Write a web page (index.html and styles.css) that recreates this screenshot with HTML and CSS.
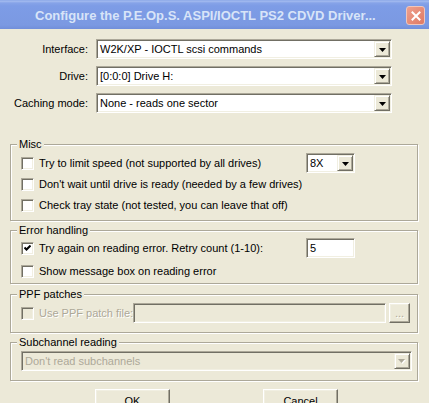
FILE: index.html
```html
<!DOCTYPE html>
<html>
<head>
<meta charset="utf-8">
<link rel="stylesheet" href="styles.css">
</head>
<body>
<div class="window">
  <div class="titlebar">
    <span class="title">Configure the P.E.Op.S. ASPI/IOCTL PS2 CDVD Driver...</span>
    <span class="close"><svg width="10" height="10" viewBox="0 0 10 10"><path d="M1.5 1.5 L8.5 8.5 M8.5 1.5 L1.5 8.5" stroke="#fff" stroke-width="2" stroke-linecap="square"/></svg></span>
  </div>
  <div class="content">
    <div class="fields">
      <span class="flabel">Interface:</span>
      <div class="combo"><span class="ctext">W2K/XP - IOCTL scsi commands</span><span class="arrow"><svg width="7" height="4" viewBox="0 0 7 4"><polygon points="0,0 7,0 3.5,4" fill="#000"/></svg></span></div>
      <span class="flabel">Drive:</span>
      <div class="combo"><span class="ctext">[0:0:0] Drive H:</span><span class="arrow"><svg width="7" height="4" viewBox="0 0 7 4"><polygon points="0,0 7,0 3.5,4" fill="#000"/></svg></span></div>
      <span class="flabel">Caching mode:</span>
      <div class="combo"><span class="ctext">None - reads one sector</span><span class="arrow"><svg width="7" height="4" viewBox="0 0 7 4"><polygon points="0,0 7,0 3.5,4" fill="#000"/></svg></span></div>
    </div>

    <div class="group misc">
      <span class="gtitle">Misc</span>
      <div class="row split">
        <label class="check"><span class="cb"></span><span>Try to limit speed (not supported by all drives)</span></label>
        <div class="combo small"><span class="ctext">8X</span><span class="arrow"><svg width="7" height="4" viewBox="0 0 7 4"><polygon points="0,0 7,0 3.5,4" fill="#000"/></svg></span></div>
      </div>
      <div class="row">
        <label class="check"><span class="cb"></span><span>Don't wait until drive is ready (needed by a few drives)</span></label>
      </div>
      <div class="row">
        <label class="check"><span class="cb"></span><span>Check tray state (not tested, you can leave that off)</span></label>
      </div>
    </div>

    <div class="group errors">
      <span class="gtitle">Error handling</span>
      <div class="row split">
        <label class="check"><span class="cb checked"><svg width="7" height="7" viewBox="0 0 7 7"><path d="M0.5 2.5 L2.5 4.5 L6.5 0.5" stroke="#000" stroke-width="2" fill="none"/></svg></span><span>Try again on reading error. Retry count (1-10):</span></label>
        <div class="edit small"><span class="ctext">5</span></div>
      </div>
      <div class="row second">
        <label class="check"><span class="cb"></span><span>Show message box on reading error</span></label>
      </div>
    </div>

    <div class="group ppf">
      <span class="gtitle">PPF patches</span>
      <div class="row ppfrow">
        <label class="check disabled"><span class="cb"></span><span>Use PPF patch file:</span></label>
        <div class="edit disabledfield"></div>
        <span class="btn dots disabledtext">...</span>
      </div>
    </div>

    <div class="group sub">
      <span class="gtitle">Subchannel reading</span>
      <div class="combo wide disabledfield"><span class="ctext disabledtext">Don't read subchannels</span><span class="arrow"><svg width="8" height="5" viewBox="0 0 8 5"><polygon points="1,1 8,1 4.5,5" fill="#fff"/><polygon points="0,0 7,0 3.5,4" fill="#aca899"/></svg></span></div>
    </div>

    <div class="buttons">
      <span class="btn main">OK</span>
      <span class="btn main">Cancel</span>
    </div>
  </div>
</div>
</body>
</html>
```
FILE: styles.css
```css
html, body {
  margin: 0;
  padding: 0;
  background: #ece9d8;
}
body {
  font-family: "Liberation Sans", Arial, sans-serif;
  font-size: 11px;
  color: #000;
  width: 429px;
  height: 403px;
  overflow: hidden;
}
.window {
  width: 429px;
}
.titlebar {
  height: 29px;
  display: flex;
  align-items: center;
  background: linear-gradient(#a6bdf0 0, #86a3e8 2px, #7d9ce6 5px, #7b99e2 24px, #6f8cd8 29px);
  border-top: 1px solid #93aeea;
  box-sizing: border-box;
}
.title {
  padding-left: 35px;
  font-weight: bold;
  font-size: 13px;
  color: #d8e4f8;
  white-space: nowrap;
}
.close {
  margin-left: auto;
  margin-right: 4px;
  width: 19px;
  height: 19px;
  box-sizing: border-box;
  border: 1px solid #f0c6bb;
  border-radius: 3px;
  background: linear-gradient(135deg, #eea08e, #e07a63);
  display: flex;
  align-items: center;
  justify-content: center;
  margin-top: 1px;
}
.content {
  padding: 10px 10px 0 10px;
}
.fields {
  display: grid;
  grid-template-columns: 78px 296px;
  grid-auto-rows: 20px;
  column-gap: 8px;
  row-gap: 7px;
}
.flabel {
  text-align: right;
  line-height: 20px;
}
.combo, .edit {
  box-sizing: border-box;
  height: 20px;
  display: flex;
  align-items: center;
  background: #fff;
  border: 1px solid;
  border-color: #aca899 #fff #fff #aca899;
  box-shadow: inset 1px 1px 0 #716f64, inset -1px -1px 0 #f1efe2;
  padding: 1px;
}
.ctext {
  flex: 1;
  padding-left: 2px;
  white-space: nowrap;
  overflow: hidden;
}
.arrow {
  width: 16px;
  height: 16px;
  box-sizing: border-box;
  background: #ece9d8;
  border: 1px solid;
  border-color: #f1efe2 #716f64 #716f64 #f1efe2;
  box-shadow: inset 1px 1px 0 #fff, inset -1px -1px 0 #aca899;
  display: flex;
  align-items: center;
  justify-content: center;
}
.arrow svg {
  display: block;
  margin-top: 1px;
}
.group {
  position: relative;
  border: 1px solid #aca899;
  box-shadow: 1px 1px 0 #fff, inset 1px 1px 0 #fff;
  margin-right: 1px;
  padding-left: 10px;
}
.gtitle {
  position: absolute;
  top: -7px;
  left: 6px;
  padding: 0 2px;
  background: #ece9d8;
  line-height: 13px;
}
.misc {
  margin-top: 31px;
  padding-top: 8px;
  padding-bottom: 5px;
  display: flex;
  flex-direction: column;
  gap: 1px;
}
.row {
  height: 20px;
  display: flex;
  align-items: center;
}
.split {
  display: grid;
  grid-template-columns: 285px 49px;
  align-items: center;
}
.check {
  display: flex;
  align-items: center;
  gap: 5px;
  white-space: nowrap;
}
.cb {
  width: 13px;
  height: 13px;
  box-sizing: border-box;
  border: 1px solid;
  border-color: #aca899 #fff #fff #aca899;
  box-shadow: inset 1px 1px 0 #716f64, inset -1px -1px 0 #f1efe2;
  background: #fff;
  display: flex;
  align-items: center;
  justify-content: center;
  flex: none;
}
.cb svg {
  display: block;
}
.small {
  width: 49px;
}
.errors {
  margin-top: 9px;
  padding-top: 7px;
  padding-bottom: 2px;
}
.errors .second {
  margin-top: 3px;
}
.ppf {
  margin-top: 10px;
  padding-top: 8px;
  padding-bottom: 9px;
}
.ppfrow {
  display: flex;
}
.ppfrow .check {
  width: 112px;
}
.disabled {
  color: #aca899;
  text-shadow: 1px 1px 0 #fff;
}
.disabled .cb {
  background: #ece9d8;
}
.ppfrow .edit {
  width: 253px;
}
.disabledfield {
  background: #ece9d8;
}
.disabledtext {
  color: #aca899;
}
.btn {
  box-sizing: border-box;
  display: flex;
  align-items: center;
  justify-content: center;
  background: #ece9d8;
  border: 1px solid;
  border-color: #fff #716f64 #716f64 #fff;
  box-shadow: inset -1px -1px 0 #aca899, inset 1px 1px 0 #f1efe2;
}
.dots {
  width: 21px;
  height: 20px;
  margin-left: 3px;
  text-shadow: 1px 1px 0 #fff;
}
.sub {
  margin-top: 9px;
  padding-top: 8px;
  padding-bottom: 9px;
}
.wide {
  width: 391px;
}
.buttons {
  margin-top: 8px;
  padding-left: 85px;
  display: flex;
  gap: 93px;
}
.main {
  width: 75px;
  height: 23px;
}
```
